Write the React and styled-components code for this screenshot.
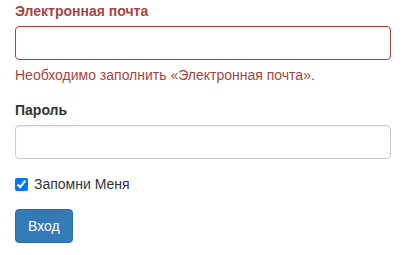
import React from "react";
import styled, { createGlobalStyle } from "styled-components";

const Global = createGlobalStyle`
  html, body {
    margin: 0;
    padding: 0;
    background: #ffffff;
  }
  body {
    font-family: "Liberation Sans", Arial, sans-serif;
    font-size: 14px;
    line-height: 1.42857143;
    color: #333333;
  }
  * {
    box-sizing: border-box;
  }
`;

const Form = styled.form`
  width: 376px;
  margin-left: 15px;
  padding-top: 1px;
`;

const Group = styled.div`
  margin-bottom: 15px;
`;

const Label = styled.label`
  display: inline-block;
  margin-bottom: 5px;
  font-weight: bold;
  color: ${({ error }) => (error ? "#a94442" : "#333333")};
`;

const Input = styled.input`
  display: block;
  width: 100%;
  height: 34px;
  padding: 6px 12px;
  font-family: inherit;
  font-size: 14px;
  color: #555555;
  background: #ffffff;
  border: 1px solid ${({ error }) => (error ? "#a94442" : "#cccccc")};
  border-radius: 4px;
  box-shadow: inset 0 1px 1px rgba(0, 0, 0, 0.075);
  outline: none;
`;

const Help = styled.span`
  display: block;
  margin-top: 5px;
  color: #a94442;
`;

const CheckRow = styled.label`
  display: flex;
  align-items: flex-start;
  min-height: 20px;
  font-weight: normal;
  cursor: pointer;

  input {
    width: 13px;
    height: 13px;
    margin: 4px 6px 0 0;
  }
`;

const Button = styled.button`
  display: inline-block;
  padding: 6px 12px;
  font-family: inherit;
  font-size: 14px;
  line-height: 1.42857143;
  color: #ffffff;
  background-color: #337ab7;
  border: 1px solid #2e6da4;
  border-radius: 4px;
  cursor: pointer;
`;

export default function App() {
  return (
    <>
      <Global />
      <Form onSubmit={(e) => e.preventDefault()}>
        <Group>
          <Label error>Электронная почта</Label>
          <Input error type="email" />
          <Help>Необходимо заполнить «Электронная почта».</Help>
        </Group>
        <Group>
          <Label>Пароль</Label>
          <Input type="password" />
        </Group>
        <Group>
          <CheckRow>
            <input type="checkbox" defaultChecked />
            Запомни Меня
          </CheckRow>
        </Group>
        <Button type="submit">Вход</Button>
      </Form>
    </>
  );
}
